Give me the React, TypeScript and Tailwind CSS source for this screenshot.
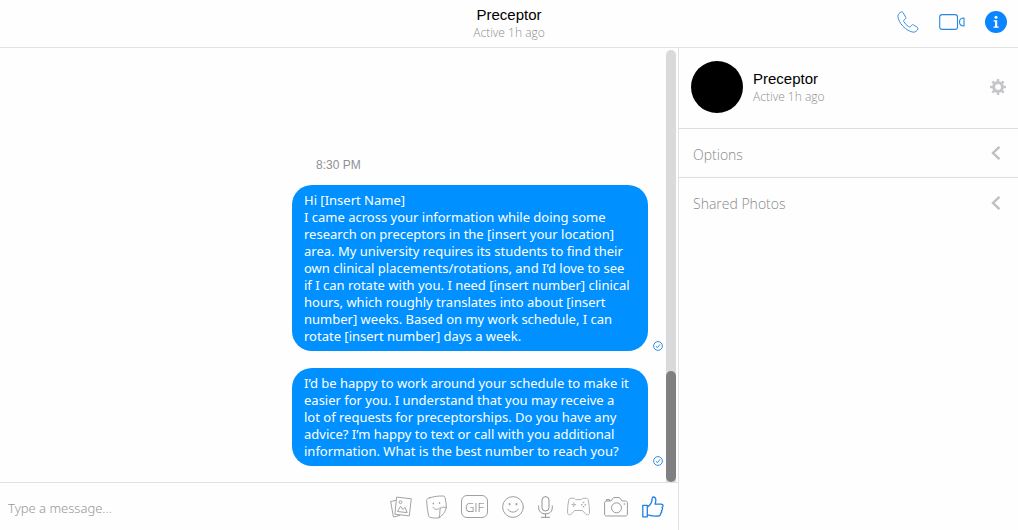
import type { ReactNode } from 'react';

const firstMessage = [
  'Hi [Insert Name]',
  'I came across your information while doing some',
  'research on preceptors in the [insert your location]',
  'area. My university requires its students to find their',
  'own clinical placements/rotations, and I’d love to see',
  'if I can rotate with you. I need [insert number] clinical',
  'hours, which roughly translates into about [insert',
  'number] weeks. Based on my work schedule, I can',
  'rotate [insert number] days a week.',
];

const secondMessage = [
  'I’d be happy to work around your schedule to make it',
  'easier for you. I understand that you may receive a',
  'lot of requests for preceptorships. Do you have any',
  'advice? I’m happy to text or call with you additional',
  'information. What is the best number to reach you?',
];

function IconButton({ label, children }: { label: string; children: ReactNode }) {
  return (
    <button type="button" aria-label={label} className="flex shrink-0 items-center justify-center">
      {children}
    </button>
  );
}

function PhoneIcon() {
  return (
    <svg width="22" height="22" viewBox="0 0 22 22" fill="none" stroke="#3d8fe0" strokeWidth="1" strokeLinejoin="round">
      <path d="M4.400.9C2.600 1.400.9 3.300.9 5.200c.3 3.300 2 6.900 5 10 3.200 3.300 6.900 5.600 10.600 6 1.700.1 3.800-1.500 4.500-3.300.2-.7 0-1.100-.6-1.500l-4-2.500c-.7-.4-1.300-.3-1.800.3l-1 1.300c-.5.6-1.100.7-1.800.3-2.100-1.300-3.700-3.100-5-5.200-.4-.7-.3-1.200.3-1.700l1.300-1c.6-.5.7-1.100.3-1.700L6 1.500C5.600.9 5.100.7 4.400.9z" />
    </svg>
  );
}

function VideoIcon() {
  return (
    <svg width="26" height="18" viewBox="0 0 26 18" fill="none" stroke="#2b86e2" strokeWidth="1.1" strokeLinejoin="round">
      <rect x=".7" y="1.600" width="17.800" height="14.800" rx="2.500" />
      <path d="M25 5v8c-2.400 0-4.500-1.500-4.500-4S22.600 5 25 5z" />
    </svg>
  );
}

function InfoIcon() {
  return (
    <svg width="22" height="22" viewBox="0 0 22 22">
      <circle cx="11" cy="11" r="11" fill="#0a84ff" />
      <circle cx="11" cy="6.200" r="1.500" fill="#fff" />
      <path d="M8.600 9.200h3.600v6.300h1.500v1.200H8.500v-1.200h1.600v-5.100H8.600z" fill="#fff" />
    </svg>
  );
}

function GearIcon() {
  return (
    <svg width="16" height="16" viewBox="0 0 16 16" fill="none" stroke="#c6c6ca">
      <circle cx="8" cy="8" r="4.400" strokeWidth="3" />
      <path
        d="M8 0v3M8 13v3M0 8h3M13 8h3M2.340 2.340l2.200 2.200M11.460 11.460l2.200 2.200M2.340 13.660l2.200-2.200M11.460 4.540l2.200-2.200"
        strokeWidth="2.400"
      />
    </svg>
  );
}

function ChevronIcon() {
  return (
    <svg width="10" height="14" viewBox="0 0 10 14" fill="none" stroke="#c0c0c4" strokeWidth="2.400">
      <path d="M8.500.8L2 7l6.500 6.200" />
    </svg>
  );
}

function DeliveredIcon() {
  return (
    <svg width="10" height="10" viewBox="0 0 10 10" fill="none" stroke="#2f8de8" strokeWidth="1" className="shrink-0" role="img" aria-label="Delivered">
      <circle cx="5" cy="5" r="4.400" />
      <path d="M2.900 5.200l1.500 1.400 2.700-3.200" />
    </svg>
  );
}

function PhotosIcon() {
  return (
    <svg width="22" height="22" viewBox="0 0 22 22" fill="none" stroke="#a3a3a6" strokeWidth="1" strokeLinejoin="round">
      <path d="M6.600 1.100l14.700 1.700-2 17.100L4.900 18.200z" />
      <path d="M6 4.300L.7 5.500l2.700 15.500 6.800-1.600" />
      <path d="M7.500 15.500l3-5.200 2.400 3.200 2.100-2.200 2.100 5.300z" />
      <circle cx="10.500" cy="6.200" r="1.400" />
    </svg>
  );
}

function StickerIcon() {
  return (
    <svg width="21" height="24" viewBox="0 0 21 24" fill="none" stroke="#a3a3a6" strokeWidth="1" strokeLinejoin="round" strokeLinecap="round">
      <path d="M3.500 2.800C8 1.500 12.500.9 17 1c1.400.1 2 .7 2.200 2 .7 3 1 6.200 1.200 9.600-1.300 4.500-3.900 8.200-7.400 10.200-2.900.5-5.900.3-8.800-.4-1-.3-1.500-.9-1.700-1.900C1.500 15.700.8 10.700.6 5.500.6 4 1.700 3.200 3.500 2.800z" />
      <path d="M20.400 12.600c-4.300-1.200-6.600 0-6.500 3.600.1 2.500-.2 4.800-.9 6.600" />
      <path d="M7 12.300c1.200 2.600 5 3 7.200.3" />
      <path d="M7.300 8.300v.5M13.500 7.800v.5" strokeWidth="1.500" />
    </svg>
  );
}

function GifIcon() {
  return (
    <span className="flex h-[23px] w-[27px] items-center justify-center rounded-[6px] border border-[#a0a0a3] font-['Open_Sans','Noto_Sans',sans-serif] text-[13px] leading-4 font-light text-[#77777b]">
      GIF
    </span>
  );
}

function SmileIcon() {
  return (
    <svg width="22" height="22" viewBox="0 0 22 22" fill="none" stroke="#a0a0a3" strokeWidth="1" strokeLinecap="round">
      <circle cx="11" cy="11" r="10.400" />
      <path d="M5.800 13.200c2.300 4 8.100 4 10.400 0" />
      <path d="M7.600 7.800v.6M14.400 7.800v.6" strokeWidth="1.800" />
    </svg>
  );
}

function MicIcon() {
  return (
    <svg width="15" height="22" viewBox="0 0 15 22" fill="none" stroke="#929296" strokeWidth="1" strokeLinecap="round">
      <rect x="4" y=".6" width="7" height="14.400" rx="3.500" />
      <path d="M.7 10v1.500c0 4 2.800 6.400 6.800 6.400s6.800-2.400 6.800-6.400V10M7.500 18v3M3.500 21.300h8" />
    </svg>
  );
}

function GamepadIcon() {
  return (
    <svg width="23" height="19" viewBox="0 0 23 19" fill="none" stroke="#b2b2b5" strokeWidth="1" strokeLinejoin="round">
      <path d="M4 1.200h3.200l1.300 1.400h6L15.800 1.200H19c1.400 0 2 .8 2.300 2 .8 4 1.200 8 1.200 12 0 2.900-2.300 3.500-4.200 1.500l-2.800-3.200h-8L4.700 16.700C2.800 18.700.5 18.100.5 15.200c0-4 .4-8 1.200-12C2 2 2.600 1.200 4 1.200z" />
      <path d="M4.500 7.700h4.600M6.800 5.400V10" />
      <path d="M16.500 4.700v1.600M16.500 9v1.600M14 7.700h1.500M17.600 7.700h1.500" strokeWidth="1.500" />
    </svg>
  );
}

function CameraIcon() {
  return (
    <svg width="24" height="20" viewBox="0 0 24 20" fill="none" stroke="#99999c" strokeWidth="1" strokeLinejoin="round">
      <path d="M2.600 4H7l1.800-2.700c.3-.5.600-.7 1.200-.7h5c.6 0 .9.200 1.200.7L18 4h3.400c1.300 0 2 .8 2 2v11c0 1.300-.8 2-2 2H2.600c-1.300 0-2-.8-2-2V6c0-1.200.7-2 2-2z" />
      <circle cx="12.500" cy="10.800" r="5" />
      <path d="M2.500 4V2.600h3V4" />
      <path d="M19.700 7h1.500" strokeWidth="1.300" />
    </svg>
  );
}

function LikeIcon() {
  return (
    <svg width="22" height="22" viewBox="0 0 22 22" fill="none" stroke="#2080e2" strokeWidth="1.300" strokeLinejoin="round">
      <path d="M.8 9.300h4.500v11.500H.8z" />
      <path d="M5.300 11.200c2.800-1.900 4.500-4.300 4.700-7.300.1-1.700-.1-2.900 1.300-2.900 1.900 0 2.700 1.700 2.500 3.800-.1 1.300-.4 2.300-.8 3.400h6c1.300 0 2 .7 2 1.700s-.6 1.500-1 1.700c.5.500.6 1.200.4 1.800-.2.700-.6 1-1 1.200.4.500.4 1.100.2 1.700s-.6.900-1 1.100c.2 1.500-.8 2.500-2.500 2.600-3.800.2-6.800 0-9.100-.9H5.300" />
    </svg>
  );
}

function Message({ lines }: { lines: string[] }) {
  return (
    <div className="flex items-end justify-end gap-[5px]">
      <p className="w-[356px] rounded-[20px] bg-[#0090ff] pt-[7px] pb-[6px] pl-3 font-['Noto_Sans','Open_Sans',sans-serif] text-[13px] leading-[17px] whitespace-nowrap text-white">
        {lines.map((line) => (
          <span key={line} className="block">
            {line}
          </span>
        ))}
      </p>
      <DeliveredIcon />
    </div>
  );
}

function PanelRow({ title }: { title: string }) {
  return (
    <button
      type="button"
      className="flex h-[49px] w-full items-center justify-between pr-[17px] pl-[14px] font-['Open_Sans','Noto_Sans',sans-serif] text-[14px] font-light text-[#88888c]"
    >
      <span className="pt-[2px]">{title}</span>
      <ChevronIcon />
    </button>
  );
}

export default function App() {
  return (
    <div className="flex h-screen flex-col bg-[#fefefe] font-['Liberation_Sans',Arial,sans-serif]">
      <header className="grid h-12 shrink-0 grid-cols-[1fr_auto_1fr] items-center border-b border-[#e2e2e4]">
        <div className="col-start-2 text-center">
          <h1 className="text-[15px] leading-[18px] text-black">Preceptor</h1>
          <p className="font-['Open_Sans','Noto_Sans',sans-serif] text-[12px] leading-[18px] font-light text-[#8e8e92]">
            Active 1h ago
          </p>
        </div>
        <div className="flex items-center justify-end gap-5 pr-[11px] pb-1">
          <IconButton label="Start a voice call">
            <PhoneIcon />
          </IconButton>
          <IconButton label="Start a video call">
            <VideoIcon />
          </IconButton>
          <IconButton label="Conversation information">
            <InfoIcon />
          </IconButton>
        </div>
      </header>

      <div className="flex min-h-0 flex-1">
        <main className="flex min-w-0 flex-1 flex-col">
          <div className="flex min-h-0 flex-1">
            <section aria-label="Messages" className="flex min-w-0 flex-1 flex-col justify-end gap-[17px] pr-[3px] pb-4">
              <div className="flex flex-col gap-3">
                <div className="flex justify-end pr-[15px]">
                  <time className="w-[356px] pl-6 text-[12px] leading-4 text-[#909094]">8:30 PM</time>
                </div>
                <Message lines={firstMessage} />
              </div>
              <Message lines={secondMessage} />
            </section>
            <div aria-hidden="true" className="mt-[2px] mr-[2px] flex w-[10px] flex-col justify-end rounded-t-[5px] bg-[#dadadc]">
              <div className="h-[111px] rounded-[5px] bg-[#808082]" />
            </div>
          </div>
          <form className="flex h-12 shrink-0 items-center border-t border-[#e2e2e4] pr-[14px] pl-2">
            <input
              type="text"
              aria-label="Message"
              placeholder="Type a message..."
              className="mt-1 min-w-0 flex-1 bg-transparent font-['Noto_Sans','Open_Sans',sans-serif] text-[13px] font-light text-[#444] outline-none placeholder:text-[#97979b]"
            />
            <div className="flex items-center gap-[14px]">
              <IconButton label="Add photos">
                <PhotosIcon />
              </IconButton>
              <IconButton label="Choose a sticker">
                <StickerIcon />
              </IconButton>
              <IconButton label="GIF">
                <GifIcon />
              </IconButton>
              <IconButton label="Choose an emoji">
                <SmileIcon />
              </IconButton>
              <IconButton label="Record a voice clip">
                <MicIcon />
              </IconButton>
              <IconButton label="Play a game">
                <GamepadIcon />
              </IconButton>
              <IconButton label="Take a photo">
                <CameraIcon />
              </IconButton>
              <IconButton label="Send a like">
                <LikeIcon />
              </IconButton>
            </div>
          </form>
        </main>

        <aside className="w-[340px] shrink-0 divide-y divide-[#dedee0] border-l border-[#e2e2e4]">
          <div className="flex h-[81px] items-center gap-[10px] pr-[12px] pb-[2px] pl-3">
            <div className="size-[52px] shrink-0 rounded-full bg-black" />
            <div className="flex-1 pt-[2px]">
              <h2 className="text-[15px] leading-[18px] text-black">Preceptor</h2>
              <p className="font-['Open_Sans','Noto_Sans',sans-serif] text-[12px] leading-[18px] font-light text-[#8e8e92]">
                Active 1h ago
              </p>
            </div>
            <IconButton label="Conversation settings">
              <GearIcon />
            </IconButton>
          </div>
          <PanelRow title="Options" />
          <PanelRow title="Shared Photos" />
        </aside>
      </div>
    </div>
  );
}
